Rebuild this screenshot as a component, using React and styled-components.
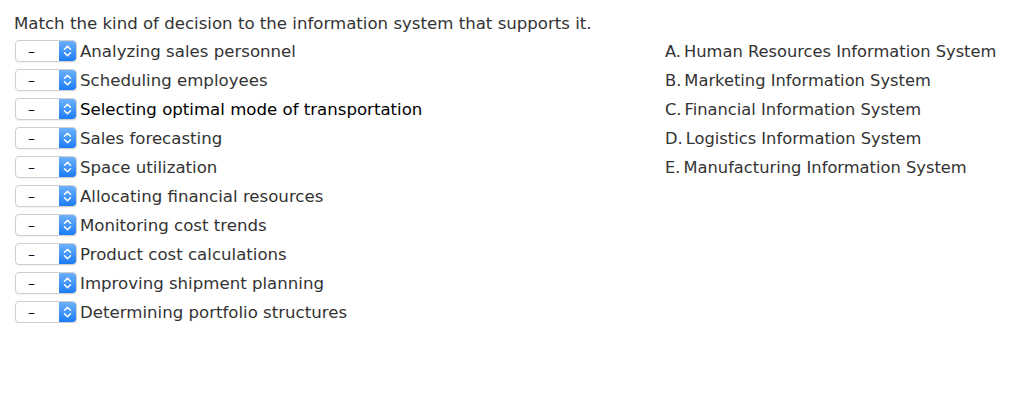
import React from "react";
import styled, { createGlobalStyle } from "styled-components";

const GlobalStyle = createGlobalStyle`
  body {
    margin: 0;
    background: #fff;
    font-family: "DejaVu Sans", "Open Sans", sans-serif;
    color: #333;
  }
`;

const decisions = [
  "Analyzing sales personnel",
  "Scheduling employees",
  "Selecting optimal mode of transportation",
  "Sales forecasting",
  "Space utilization",
  "Allocating financial resources",
  "Monitoring cost trends",
  "Product cost calculations",
  "Improving shipment planning",
  "Determining portfolio structures",
];

const systems = [
  ["A.", "Human Resources Information System"],
  ["B.", "Marketing Information System"],
  ["C.", "Financial Information System"],
  ["D.", "Logistics Information System"],
  ["E.", "Manufacturing Information System"],
];

function Stepper() {
  return (
    <svg width="9" height="14" viewBox="0 0 9 14">
      <path
        d="M1.5 5.2 L4.5 2.2 L7.5 5.2 M1.5 8.8 L4.5 11.8 L7.5 8.8"
        fill="none"
        stroke="#fff"
        strokeWidth="1.5"
        strokeLinecap="round"
        strokeLinejoin="round"
      />
    </svg>
  );
}

function App() {
  return (
    <Page>
      <GlobalStyle />
      <Prompt>Match the kind of decision to the information system that supports it.</Prompt>
      <Columns>
        <Left>
          {decisions.map((d, i) => (
            <Row key={d}>
              <Select>
                <Value>–</Value>
                <Arrows>
                  <Stepper />
                </Arrows>
              </Select>
              <Label $active={i === 2}>{d}</Label>
            </Row>
          ))}
        </Left>
        <Right>
          {systems.map(([letter, name]) => (
            <Option key={letter}>
              <Letter>{letter}</Letter>
              {name}
            </Option>
          ))}
        </Right>
      </Columns>
    </Page>
  );
}

const Page = styled.div`
  padding: 14px 0 0 14px;
  font-size: 16.6px;
`;

const Prompt = styled.div`
  line-height: 20px;
  margin-bottom: 6px;
  color: #333;
`;

const Columns = styled.div`
  display: flex;
`;

const Left = styled.div`
  width: 650px;
  display: flex;
  flex-direction: column;
  gap: 7px;
  padding-left: 1px;
`;

const Row = styled.div`
  display: flex;
  align-items: center;
  height: 22px;
`;

const Select = styled.div`
  width: 62px;
  height: 22px;
  box-sizing: border-box;
  border: 1px solid #cfcfcf;
  border-radius: 4px;
  background: #fff;
  display: flex;
  overflow: hidden;
  box-shadow: 0 1px 1px rgba(0, 0, 0, 0.05);
`;

const Value = styled.div`
  flex: 1;
  display: flex;
  align-items: center;
  padding-left: 12px;
  font-size: 14px;
  color: #111;
`;

const Arrows = styled.div`
  width: 17px;
  background: linear-gradient(#6cb1fc, #1c7cf5);
  display: flex;
  align-items: center;
  justify-content: center;
  border-radius: 0 3px 3px 0;
`;

const Label = styled.div`
  margin-left: 3px;
  color: ${(p) => (p.$active ? "#000" : "#333")};
  white-space: nowrap;
`;

const Right = styled.div`
  display: flex;
  flex-direction: column;
  gap: 7px;
  font-size: 16.3px;
`;

const Option = styled.div`
  height: 22px;
  line-height: 23px;
  color: #333;
  white-space: nowrap;
`;

const Letter = styled.span`
  margin-right: 3px;
`;

export default App;
